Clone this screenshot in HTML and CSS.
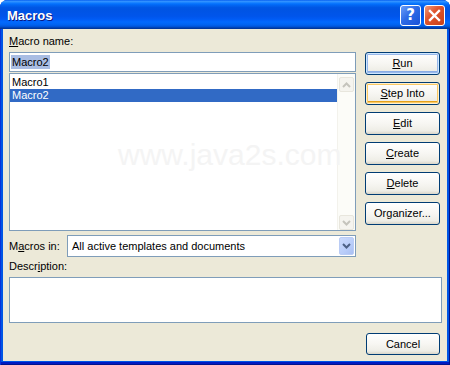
FILE: index.html
```html
<!DOCTYPE html>
<html>
<head>
<meta charset="utf-8">
<link rel="stylesheet" href="styles.css">
</head>
<body>
<div class="window">
  <div class="titlebar">
    <span class="title">Macros</span>
    <div class="tb-buttons">
      <div class="tb-btn help">?</div>
      <div class="tb-btn close">
        <svg width="13" height="13" viewBox="0 0 13 13"><path d="M2 2 L11 11 M11 2 L2 11" stroke="#fff" stroke-width="2.4" stroke-linecap="square"/></svg>
      </div>
    </div>
  </div>
  <div class="client">
    <div class="top">
      <div class="left">
        <div class="label"><u>M</u>acro name:</div>
        <div class="textbox"><span class="sel">Macro2</span></div>
        <div class="listbox">
          <div class="items">
            <div class="item">Macro1</div>
            <div class="item selected">Macro2</div>
          </div>
          <div class="scrollbar">
            <div class="sb-btn">
              <svg width="9" height="6" viewBox="0 0 9 6"><path d="M1 5 L4.5 1.5 L8 5" fill="none" stroke="#C5C4BD" stroke-width="2"/></svg>
            </div>
            <div class="sb-track"></div>
            <div class="sb-btn">
              <svg width="9" height="6" viewBox="0 0 9 6"><path d="M1 1 L4.5 4.5 L8 1" fill="none" stroke="#C5C4BD" stroke-width="2"/></svg>
            </div>
          </div>
          <div class="watermark">www.java2s.com</div>
        </div>
        <div class="macros-in">
          <div class="label">M<u>a</u>cros in:</div>
          <div class="combo">
            <span class="combo-text">All active templates and documents</span>
            <div class="combo-btn">
              <svg width="9" height="6" viewBox="0 0 9 6"><path d="M1 1 L4.5 4.5 L8 1" fill="none" stroke="#4D6185" stroke-width="2"/></svg>
            </div>
          </div>
        </div>
      </div>
      <div class="right">
        <div class="btn default"><u>R</u>un</div>
        <div class="btn hot"><u>S</u>tep Into</div>
        <div class="btn"><u>E</u>dit</div>
        <div class="btn"><u>C</u>reate</div>
        <div class="btn"><u>D</u>elete</div>
        <div class="btn">Organizer...</div>
      </div>
    </div>
    <div class="label desc-label">Descr<u>i</u>ption:</div>
    <div class="desc"></div>
    <div class="bottom">
      <div class="btn cancel">Cancel</div>
    </div>
  </div>
</div>
</body>
</html>
```
FILE: styles.css
```css
html, body {
  margin: 0;
  padding: 0;
  background: #ffffff;
}
.window {
  width: 450px;
  height: 365px;
  box-sizing: border-box;
  background: #0055E5;
  border-radius: 8px 8px 0 0;
  display: flex;
  flex-direction: column;
  font-family: "Liberation Sans", Arial, sans-serif;
  font-size: 11px;
  color: #000;
  padding: 0 3px 4px 3px;
  box-shadow: inset 1px 0 0 #0831D9, inset -1px 0 0 #00138C, inset 0 -1px 0 #00138C, inset 0 -3px 0 #0019C2;
}
.titlebar {
  height: 29px;
  margin: 0 -3px;
  border-radius: 7px 7px 0 0;
  background: linear-gradient(to bottom, #0058EE 0%, #3593FF 4%, #288EFF 7%, #127DFF 10%, #036FFC 14%, #0262EE 20%, #0057E5 26%, #0054E3 32%, #0055EB 56%, #005BF5 66%, #026AFE 76%, #0062EF 86%, #0052D6 92%, #0040AB 96%, #003092 100%);
  display: flex;
  align-items: center;
  justify-content: space-between;
  padding: 0 5px 0 7px;
}
.title {
  color: #fff;
  font-weight: bold;
  font-size: 13px;
  text-shadow: 1px 1px 0 #0A1883;
  margin-top: 1px;
}
.tb-buttons {
  display: flex;
  gap: 3px;
  margin-top: 2px;
}
.tb-btn {
  width: 21px;
  height: 21px;
  box-sizing: border-box;
  border: 1px solid #fff;
  border-radius: 3px;
  display: flex;
  align-items: center;
  justify-content: center;
}
.help {
  background: linear-gradient(135deg, #6A9EF8 0%, #2E6BE6 45%, #1A52D8 100%);
  color: #fff;
  font-family: "DejaVu Sans", sans-serif;
  font-weight: bold;
  font-size: 15px;
  line-height: 1;
}
.close {
  background: linear-gradient(135deg, #EE9A7C 0%, #E0552E 40%, #C7401A 100%);
}
.client {
  flex: 1;
  background: #ECE9D8;
  padding: 6px 0 0 6px;
  display: flex;
  flex-direction: column;
}
.label {
  line-height: 13px;
  height: 13px;
}
.top {
  display: flex;
  gap: 9px;
}
.left {
  width: 347px;
  display: flex;
  flex-direction: column;
}
.textbox {
  margin-top: 4px;
  height: 20px;
  box-sizing: border-box;
  border: 1px solid #7F9DB9;
  background: #fff;
  padding: 2px 0 0 1px;
  line-height: 14px;
}
.sel {
  background: #A9BDE3;
  padding: 0 1px;
  display: inline-block;
}
.listbox {
  position: relative;
  margin-top: 1px;
  height: 158px;
  box-sizing: border-box;
  border: 1px solid #7F9DB9;
  background: #fff;
  display: flex;
  overflow: hidden;
}
.items {
  flex: 1;
  padding-top: 2px;
}
.item {
  height: 13px;
  line-height: 13px;
  padding-left: 2px;
}
.item.selected {
  background: #316AC5;
  color: #fff;
}
.scrollbar {
  width: 17px;
  background: #FCFCF8;
  border-left: 1px solid #F3F2EC;
  display: flex;
  flex-direction: column;
  align-items: center;
  padding: 3px 0 0 0;
}
.sb-btn {
  width: 15px;
  height: 15px;
  box-sizing: border-box;
  border: 1px solid #E8E6DD;
  border-radius: 2px;
  background: #F5F4EF;
  display: flex;
  align-items: center;
  justify-content: center;
}
.sb-track {
  flex: 1;
}
.watermark {
  position: absolute;
  left: 108px;
  top: 66px;
  font-size: 30px;
  line-height: 1;
  color: #F4F4F4;
  font-family: "Liberation Sans", Arial, sans-serif;
  pointer-events: none;
}
.macros-in {
  margin-top: 4px;
  display: flex;
  align-items: center;
}
.macros-in .label {
  width: 58px;
}
.combo {
  flex: 1;
  height: 22px;
  box-sizing: border-box;
  border: 1px solid #7F9DB9;
  background: #fff;
  display: flex;
  align-items: center;
  padding: 1px 1px 1px 4px;
}
.combo-text {
  flex: 1;
}
.combo-btn {
  width: 15px;
  height: 18px;
  box-sizing: border-box;
  border: 1px solid #BACCF5;
  border-radius: 2px;
  background: linear-gradient(135deg, #CBDAFC 0%, #B9CDF9 60%, #A9BFF2 100%);
  display: flex;
  align-items: center;
  justify-content: center;
}
.right {
  margin-top: 17px;
  display: flex;
  flex-direction: column;
  gap: 7px;
}
.btn {
  width: 75px;
  height: 23px;
  box-sizing: border-box;
  border: 1px solid #003C74;
  border-radius: 3px;
  background: linear-gradient(to bottom, #FFFFFF 0%, #F7F6F2 50%, #EEEDE6 85%, #D8D5C9 100%);
  display: flex;
  align-items: center;
  justify-content: center;
  line-height: 13px;
}
.btn.default {
  box-shadow: inset 0 0 0 1px #CEE7FF, inset 0 0 0 2px #98B8EA, inset 0 -2px 0 1px #89ADE4;
}
.btn.hot {
  box-shadow: inset 0 0 0 1px #FFF0CF, inset 0 0 0 2px #F9C965, inset 0 -2px 0 1px #E5A01A;
}
.desc-label {
  margin-top: 3px;
}
.desc {
  margin-top: 4px;
  width: 433px;
  height: 46px;
  box-sizing: border-box;
  border: 1px solid #7F9DB9;
  background: #fff;
}
.bottom {
  display: flex;
  padding-left: 357px;
  margin-top: 10px;
}
.btn.cancel {
  width: 74px;
  height: 22px;
}
```
